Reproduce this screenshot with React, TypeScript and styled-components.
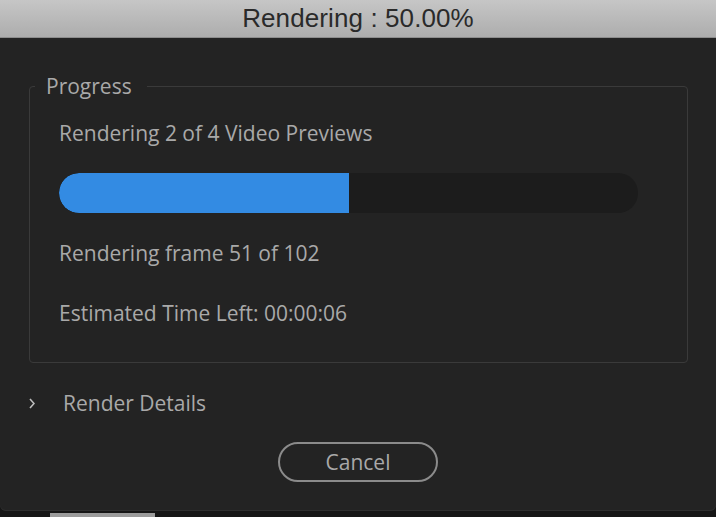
import React from 'react'
import styled, { createGlobalStyle } from 'styled-components'

const GlobalStyle = createGlobalStyle`
  html, body {
    margin: 0;
    padding: 0;
    background: #161616;
  }
  body {
    font-family: 'Open Sans', 'Noto Sans', sans-serif;
  }
`

const Window = styled.div`
  width: 716px;
  height: 511px;
  background: #232323;
  border-radius: 0 0 6px 6px;
  box-shadow: inset 0 -1px 0 #2e2e2e;
  display: flex;
  flex-direction: column;
`

const TitleBar = styled.div`
  height: 37px;
  flex: none;
  background: linear-gradient(#c6c6c6, #adadad);
  border-bottom: 1px solid #8d8d8d;
  display: flex;
  align-items: center;
  justify-content: center;
  font-family: 'Liberation Sans', Arial, sans-serif;
  font-size: 26px;
  letter-spacing: 0.1px;
  color: #2a2a2a;
`

const Body = styled.div`
  display: flex;
  flex-direction: column;
  padding: 0 28px 0 29px;
  color: #a9a9a9;
  font-size: 21px;
  line-height: 24px;
`

const Group = styled.fieldset`
  margin: 36px 0 0;
  padding: 23px 29px 37px;
  border: 1px solid #3a3a3a;
  border-radius: 4px;
  display: flex;
  flex-direction: column;
`

const Legend = styled.legend`
  margin-left: -24px;
  padding: 0 15px 0 11px;
  line-height: 24px;
`

const Line = styled.div<{ $top?: number }>`
  margin-top: ${(p) => p.$top ?? 0}px;
  white-space: nowrap;
`

const Track = styled.div`
  margin-top: 28px;
  width: 579px;
  height: 40px;
  border-radius: 20px;
  background: #1c1c1c;
  overflow: hidden;
`

const Fill = styled.div`
  height: 100%;
  background: #338be3;
  border-radius: 20px 0 0 20px;
`

const Disclosure = styled.div`
  margin-top: 28px;
  display: flex;
  align-items: center;
  height: 24px;
`

const Chevron = styled.svg`
  width: 6px;
  height: 11px;
  margin-right: 28px;
`

const Footer = styled.div`
  display: flex;
  justify-content: center;
  margin-top: 27px;
`

const Button = styled.button`
  width: 160px;
  height: 40px;
  border: 2px solid #8b8b8b;
  border-radius: 20px;
  background: transparent;
  color: #a9a9a9;
  font-family: inherit;
  font-size: 21px;
  padding: 0;
  margin-left: -1px;
`

const Backdrop = styled.div`
  height: 6px;
  display: flex;
  align-items: flex-end;
  padding-left: 50px;
`

const BackTab = styled.div`
  width: 105px;
  height: 4px;
  background: #9c9c9c;
`

export default function App() {
  const progress = 0.5
  return (
    <>
      <GlobalStyle />
      <Window>
        <TitleBar>Rendering : 50.00%</TitleBar>
        <Body>
          <Group>
            <Legend>Progress</Legend>
            <Line>Rendering 2 of 4 Video Previews</Line>
            <Track>
              <Fill style={{ width: `${progress * 100}%` }} />
            </Track>
            <Line $top={28}>Rendering frame 51 of 102</Line>
            <Line $top={36}>Estimated Time Left: 00:00:06</Line>
          </Group>
          <Disclosure>
            <Chevron viewBox="0 0 6 11">
              <polyline points="1,1 5,5.5 1,10" fill="none" stroke="#bdbdbd" strokeWidth="1.6" />
            </Chevron>
            Render Details
          </Disclosure>
          <Footer>
            <Button>Cancel</Button>
          </Footer>
        </Body>
      </Window>
      <Backdrop>
        <BackTab />
      </Backdrop>
    </>
  )
}
